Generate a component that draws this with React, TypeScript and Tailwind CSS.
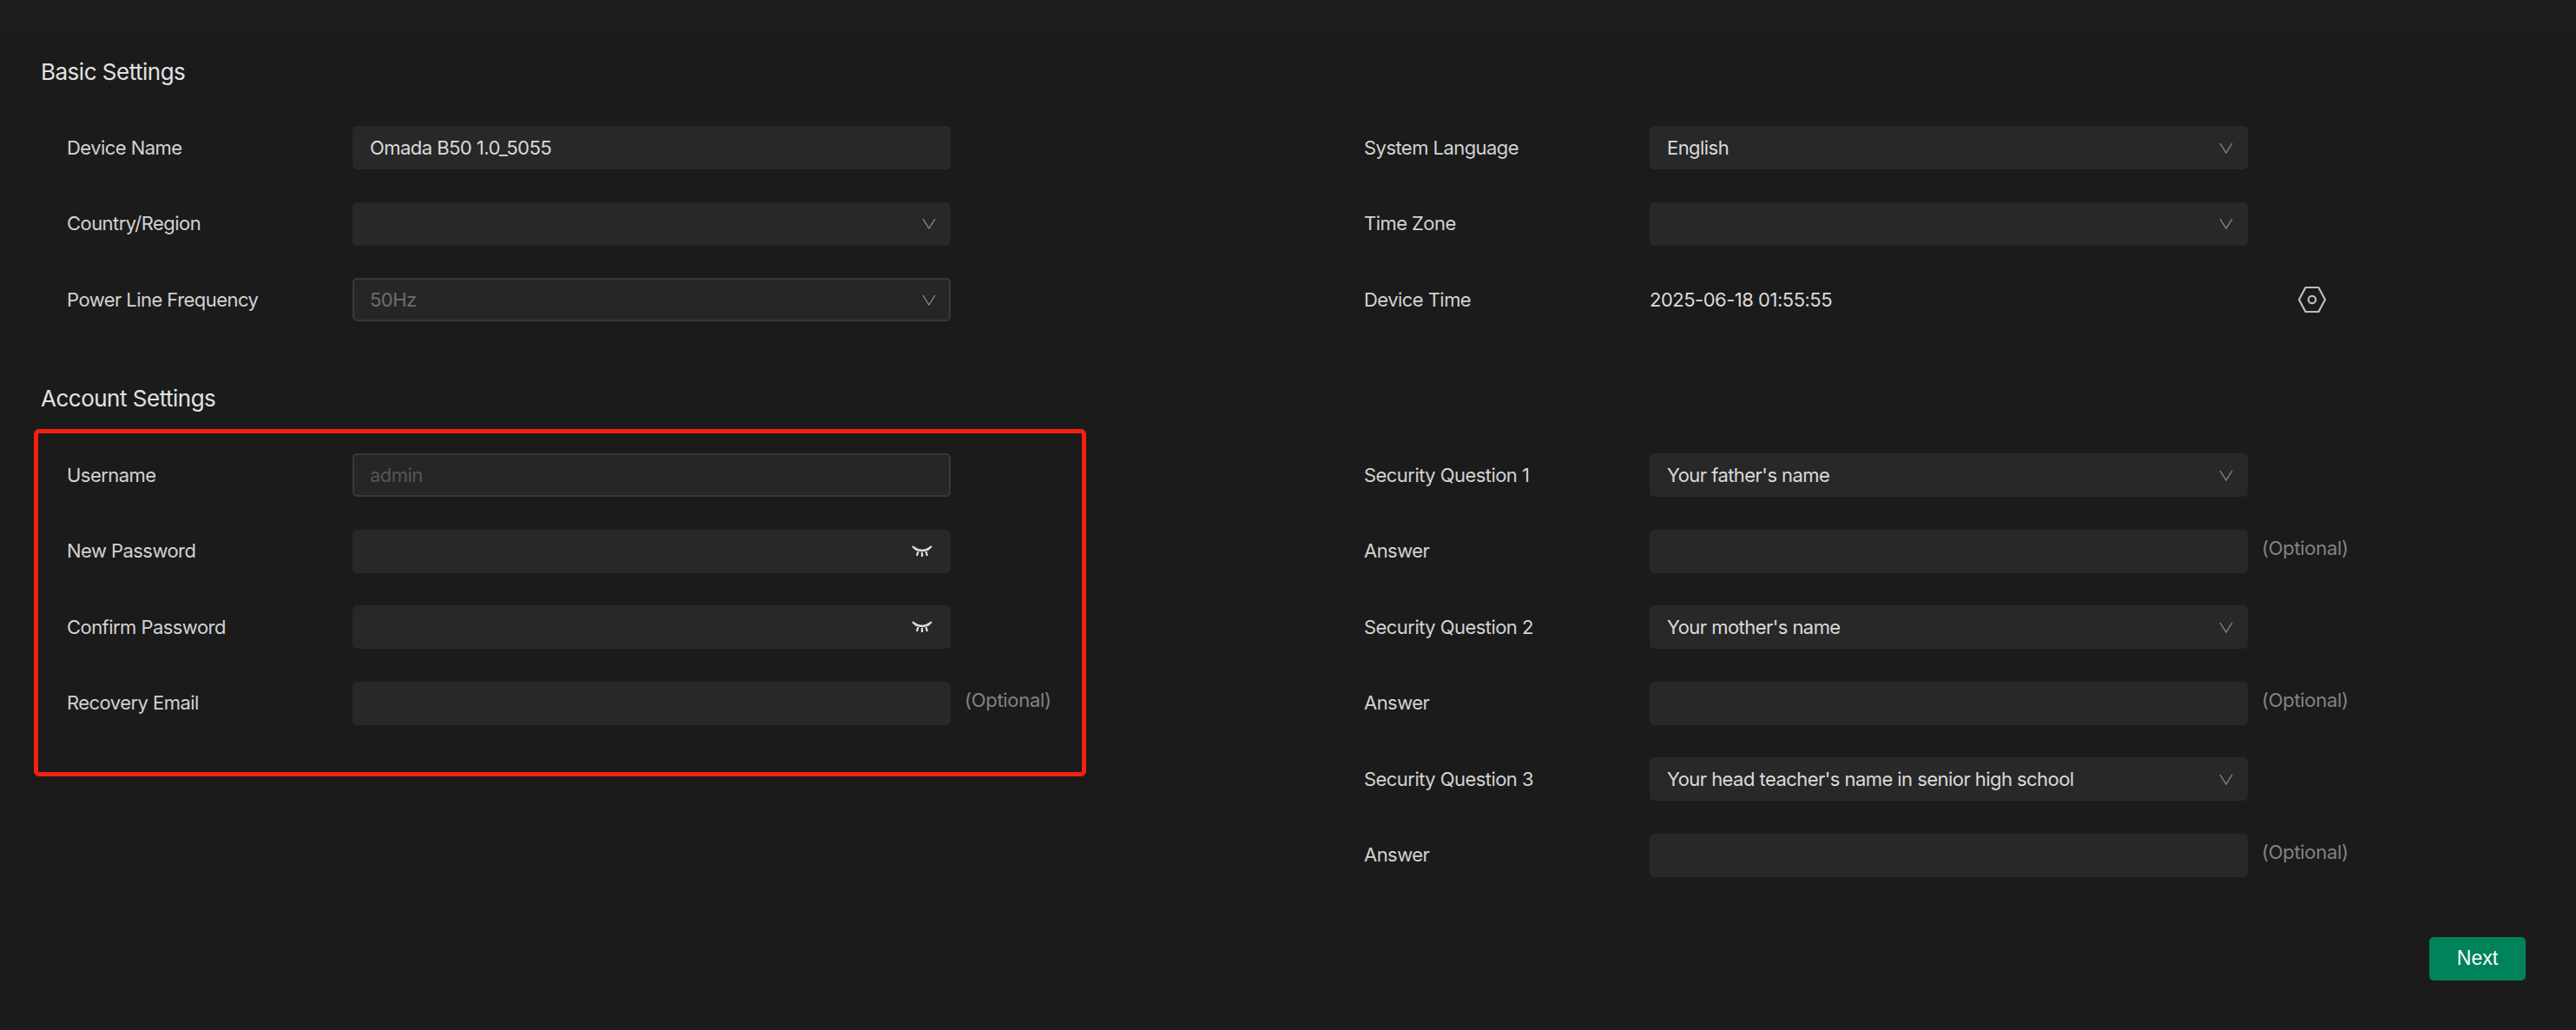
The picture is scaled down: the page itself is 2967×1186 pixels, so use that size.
import type { ReactNode } from 'react';

const font = { fontFamily: 'Inter, "Noto Sans", sans-serif' };

function Chevron() {
  return (
    <svg width="16" height="13" viewBox="0 0 16 13" fill="none" className="mr-[-4px] shrink-0">
      <path d="M1 1 L8 12 L15 1" stroke="#8a8a8a" strokeWidth="1.3" />
    </svg>
  );
}

function ClosedEye() {
  return (
    <svg width="24" height="14" viewBox="0 0 24 14" fill="none" className="shrink-0">
      <path
        d="M2.5 2.5 Q12 9.5 21.5 2.5 M1 1 L6 5.5 M23 1 L18 5.5 M7.5 7 L6 12 M12 8 L12 13 M16.5 7 L18 12"
        stroke="#dcdcdc"
        strokeWidth="2.3"
      />
    </svg>
  );
}

function SyncIcon() {
  return (
    <svg width="34" height="32" viewBox="0 0 34 32" fill="none">
      <path d="M9.5 2 H24.5 L32 16 L24.5 30 H9.5 L2 16 Z" stroke="#bdbdbd" strokeWidth="2.2" strokeLinejoin="round" />
      <circle cx="17" cy="16" r="4.2" stroke="#bdbdbd" strokeWidth="2.2" />
    </svg>
  );
}

function Row({ label, children }: { label: string; children: ReactNode }) {
  return (
    <div className="flex h-[50px] items-center">
      <div className="w-[329px] shrink-0 text-[22px] tracking-[-0.55px] text-[#d2d2d2]">{label}</div>
      {children}
    </div>
  );
}

function Field({
  value,
  tone = 'text-[#dadada]',
  locked,
  icon,
}: {
  value?: string;
  tone?: string;
  locked?: boolean;
  icon?: ReactNode;
}) {
  return (
    <div
      className={`flex h-[50px] w-[689px] shrink-0 items-center justify-between rounded-[5px] text-[22px] tracking-[-0.55px] ${
        locked ? 'border-2 border-[#383838] bg-[#262626] pl-[18px] pr-[19px]' : 'bg-[#282828] pl-5 pr-[21px]'
      } ${tone}`}
    >
      <span>{value}</span>
      {icon}
    </div>
  );
}

function Optional() {
  return <span className="ml-4 pb-[6px] text-[22px] tracking-[-0.3px] text-[#828282]">(Optional)</span>;
}

function Heading({ children }: { children: string }) {
  return <h2 className="h-[30px] text-[26px] font-normal leading-[30px] tracking-[-0.5px] text-[#e2e2e2]">{children}</h2>;
}

function Column({ children }: { children: ReactNode }) {
  return <div className="flex flex-col gap-[37.5px] pl-[30px]">{children}</div>;
}

export default function App() {
  return (
    <div className="relative h-[1186px] w-full overflow-hidden bg-[#1b1b1b]" style={font}>
      <div className="h-[35px] bg-[#1e1e1e]" />

      <div className="pl-[47px] pt-[33px]">
        <Heading>Basic Settings</Heading>
        <div className="mt-[47px] flex">
          <div className="w-[1494px] shrink-0">
            <Column>
              <Row label="Device Name">
                <Field value="Omada B50 1.0_5055" />
              </Row>
              <Row label="Country/Region">
                <Field icon={<Chevron />} />
              </Row>
              <Row label="Power Line Frequency">
                <Field value="50Hz" tone="text-[#6e6e6e]" locked icon={<Chevron />} />
              </Row>
            </Column>
          </div>
          <Column>
            <Row label="System Language">
              <Field value="English" icon={<Chevron />} />
            </Row>
            <Row label="Time Zone">
              <Field icon={<Chevron />} />
            </Row>
            <Row label="Device Time">
              <div className="flex w-[780px] items-center justify-between text-[22px] tracking-[-0.5px] text-[#dadada]">
                <span>2025-06-18 01:55:55</span>
                <SyncIcon />
              </div>
            </Row>
          </Column>
        </div>

        <div className="mt-[74px]">
          <Heading>Account Settings</Heading>
        </div>
        <div className="mt-[48px] flex">
          <div className="w-[1494px] shrink-0">
            <Column>
              <Row label="Username">
                <Field value="admin" tone="text-[#555555]" locked />
              </Row>
              <Row label="New Password">
                <Field icon={<ClosedEye />} />
              </Row>
              <Row label="Confirm Password">
                <Field icon={<ClosedEye />} />
              </Row>
              <Row label="Recovery Email">
                <Field />
                <Optional />
              </Row>
            </Column>
          </div>
          <Column>
            <Row label="Security Question 1">
              <Field value="Your father's name" icon={<Chevron />} />
            </Row>
            <Row label="Answer">
              <Field />
              <Optional />
            </Row>
            <Row label="Security Question 2">
              <Field value="Your mother's name" icon={<Chevron />} />
            </Row>
            <Row label="Answer">
              <Field />
              <Optional />
            </Row>
            <Row label="Security Question 3">
              <Field value="Your head teacher's name in senior high school" icon={<Chevron />} />
            </Row>
            <Row label="Answer">
              <Field />
              <Optional />
            </Row>
          </Column>
        </div>

        <div className="mt-[69px] flex justify-end pr-[58px]">
          <button
            className="h-[50px] w-[111px] rounded-[5px] bg-[#00835a] text-[23px] text-white"
            style={{ fontFamily: '"Liberation Sans", sans-serif' }}
          >
            Next
          </button>
        </div>
      </div>

      {/* red annotation drawn over the account block */}
      <div className="pointer-events-none absolute left-[39px] top-[494px] h-[400px] w-[1212px] rounded-[6px] border-[5px] border-[#f5200f]" />
    </div>
  );
}
